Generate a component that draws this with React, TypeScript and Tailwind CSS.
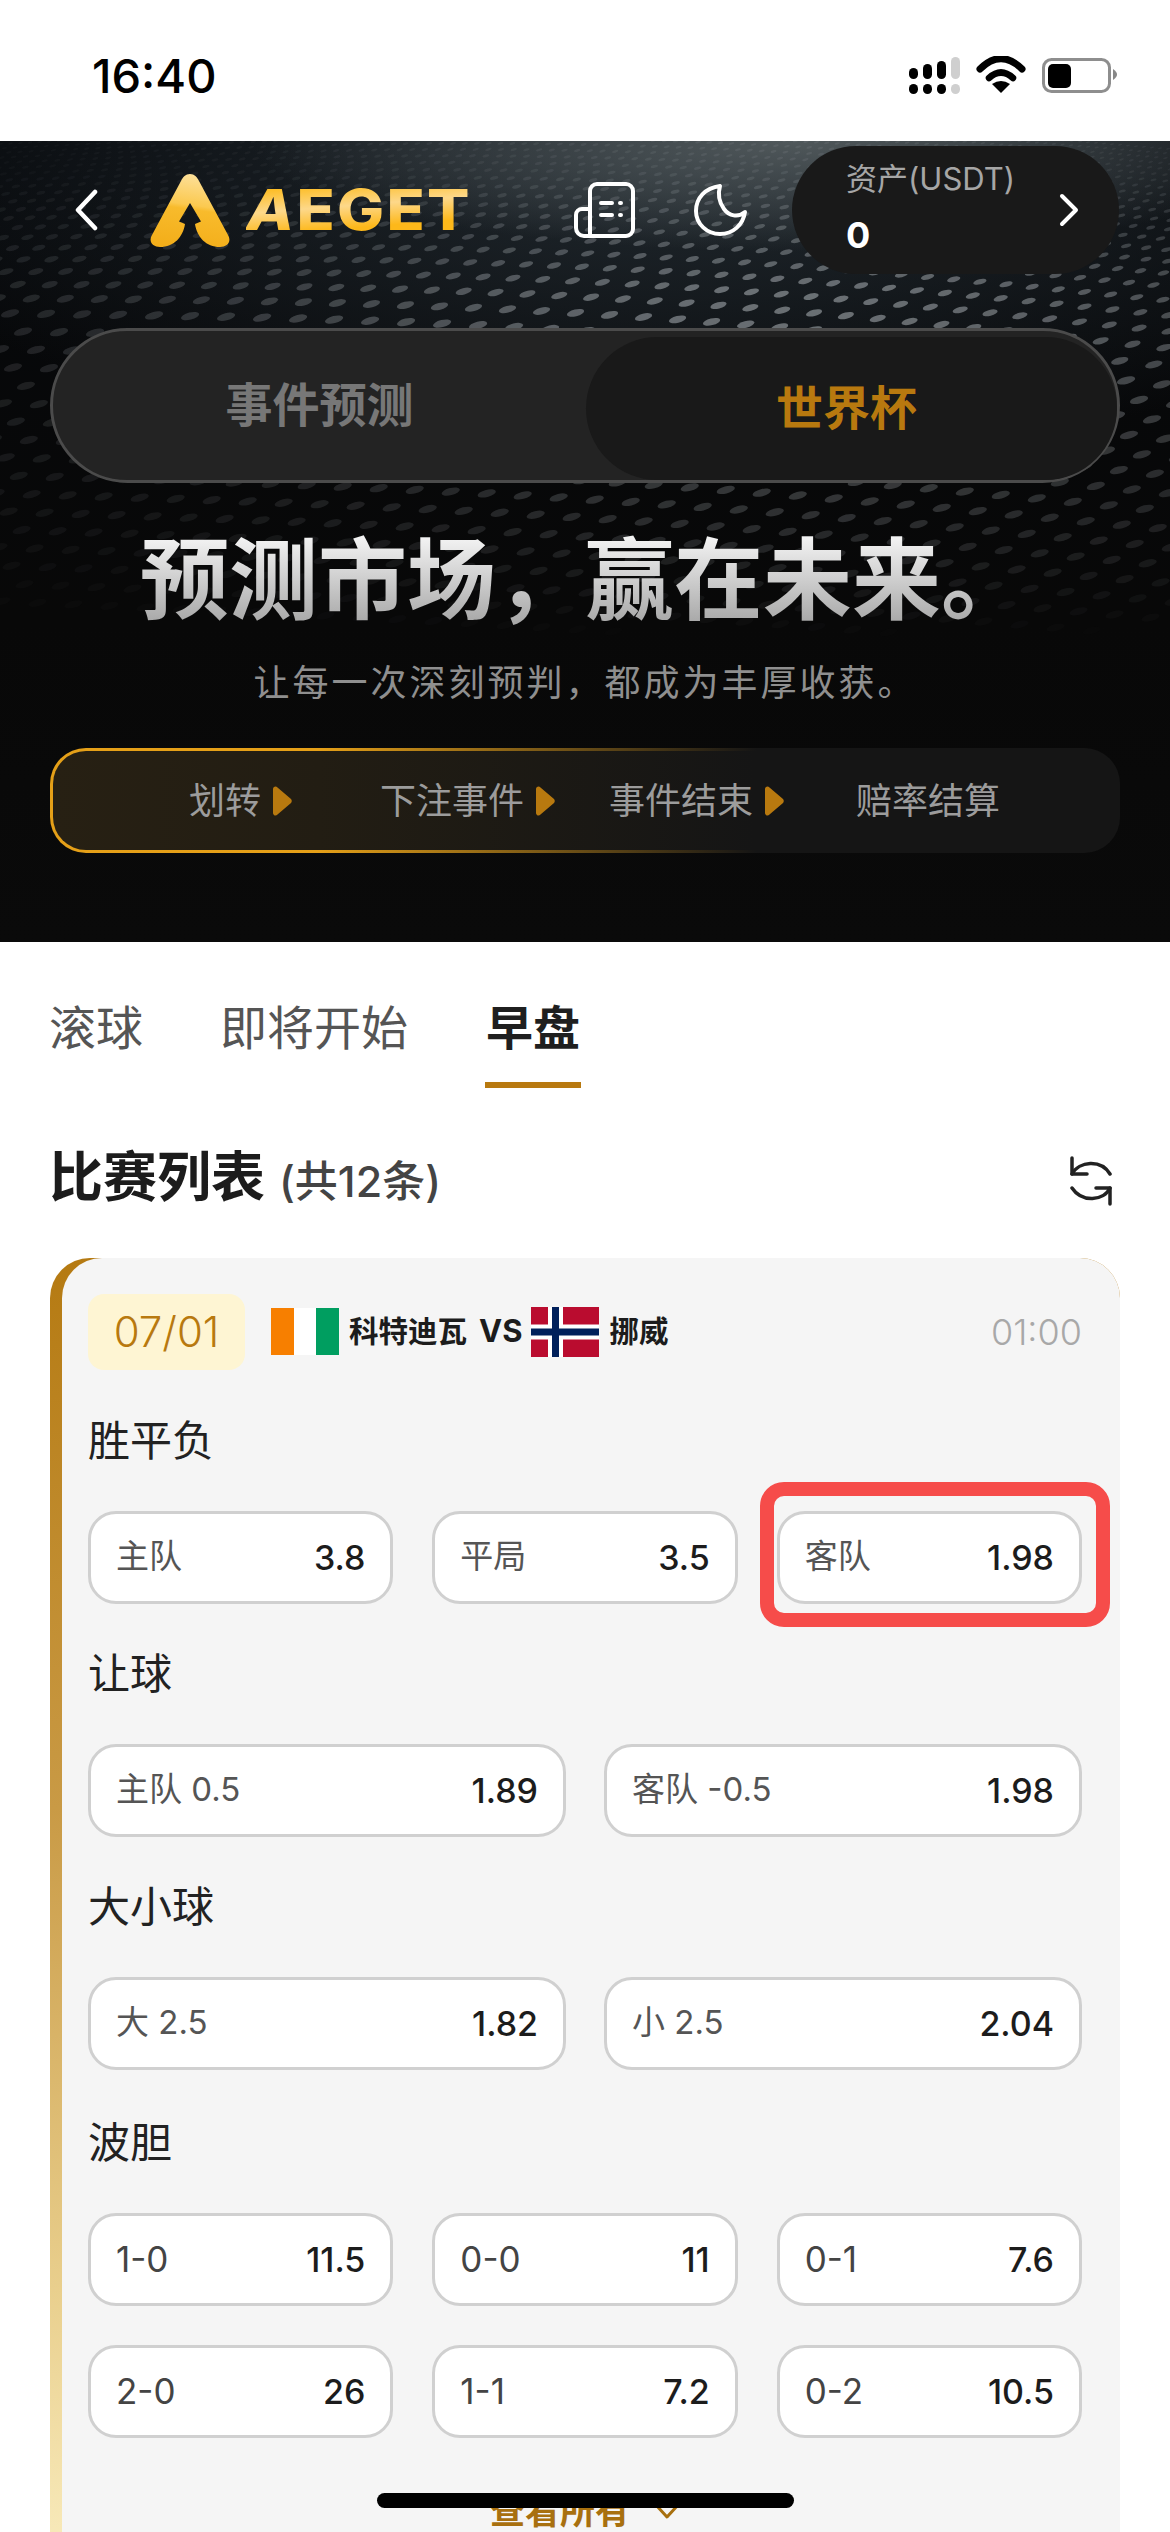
import React from "react";

type Dot = { x: number; y: number; rx: number; ry: number; o: number };

function buildDots(): Dot[] {
  const dots: Dot[] = [];
  let y = 141;
  let r = 0;
  while (y < 660) {
    const p = Math.min(18, 4 + (y - 141) * 0.068);
    const col = p * 2;
    const start = ((r * 0.36) % 1) * col - col;
    for (let x = start; x < 1190; x += col) {
      const warp = Math.sin((x / 1170) * Math.PI) * 26 * (1 - (y - 141) / 700);
      const yy = y - warp + (x / 1170) * p * 4 - p * 2;
      const cx = (x - 800) / 500;
      const horizontal = Math.exp(-cx * cx);
      let vertical = 1;
      if (yy < 290) vertical = Math.max(0.2, (yy - 141) / 149);
      if (yy > 340) vertical = Math.max(0, 1 - (yy - 340) / 300);
      const o = 0.52 * (0.22 + 0.78 * horizontal) * vertical;
      if (o > 0.012) dots.push({ x, y: yy, rx: col * 0.26, ry: p * 0.2, o });
    }
    y += p;
    r += 1;
  }
  return dots;
}

const DOTS = buildDots();

function HeroTexture() {
  return (
    <svg className="absolute left-0 top-0 h-[801px] w-[1170px]" viewBox="0 141 1170 801" aria-hidden="true">
      {DOTS.map((d, i) => (
        <ellipse
          key={i}
          cx={d.x}
          cy={d.y}
          rx={d.rx}
          ry={d.ry}
          fill="#b9bfc4"
          opacity={d.o}
          transform={`rotate(-14 ${d.x} ${d.y})`}
        />
      ))}
    </svg>
  );
}

function StatusIcons() {
  return (
    <svg width="208" height="38" viewBox="0 0 208 38">
      <g fill="#000">
        <rect x="0" y="12" width="9" height="11" rx="4.5" />
        <rect x="14" y="8" width="9" height="15" rx="4.5" />
        <rect x="28" y="5" width="9" height="18" rx="4.5" />
        <rect x="0" y="28" width="9" height="10" rx="4.5" />
        <rect x="14" y="28" width="9" height="10" rx="4.5" />
        <rect x="28" y="28" width="9" height="10" rx="4.5" />
      </g>
      <g fill="#cfcfcf">
        <rect x="42" y="1" width="9" height="22" rx="4.5" />
        <rect x="42" y="28" width="9" height="10" rx="4.5" />
      </g>
      <path d="M71 13 Q92 -8 113 13" fill="none" stroke="#000" strokeWidth="7" strokeLinecap="round" />
      <path d="M80 22 Q92 11 104 22" fill="none" stroke="#000" strokeWidth="6.5" strokeLinecap="round" />
      <path d="M92 37 L83 28 Q92 22 101 28 Z" fill="#000" />
      <rect x="134.5" y="3.5" width="66" height="32" rx="8" fill="none" stroke="#8e8e8e" strokeWidth="3" />
      <rect x="139" y="8" width="23" height="24" rx="5" fill="#000" />
      <path d="M204 13 C207 15 208 17 208 18.5 C208 20 207 22 204 24 Z" fill="#888" />
    </svg>
  );
}

function LogoMark() {
  return (
    <svg width="80" height="73" viewBox="0 0 80 73">
      <defs>
        <linearGradient id="mark" x1="0.55" y1="0" x2="0.4" y2="1">
          <stop offset="0" stopColor="#fde09a" />
          <stop offset="0.42" stopColor="#fbc94f" />
          <stop offset="0.48" stopColor="#f8bb2c" />
          <stop offset="1" stopColor="#f3ae1a" />
        </linearGradient>
      </defs>
      <path
        d="M40 0 C35.5 0 33 3 31 7 L2 61 C-2 68 3 73 10 73 C24 73 33 63 35 50 L29 47.5 L40 29 L51 47.5 L45 50 C47 63 56 73 70 73 C77 73 82 68 78 61 L49 7 C47 3 44.5 0 40 0 Z"
        fill="url(#mark)"
      />
    </svg>
  );
}

function ReceiptIcon() {
  return (
    <svg width="61" height="56" viewBox="0 0 61 56" fill="none" stroke="#fff" strokeWidth="4" strokeLinecap="round">
      <path d="M16 54 V9 a7 7 0 0 1 7-7 H52 a7 7 0 0 1 7 7 V47 a7 7 0 0 1-7 7 H10 a8 8 0 0 1-8-8 V33 a6 6 0 0 1 6-6 H16" strokeLinejoin="round" />
      <path d="M27 21 H38 M27 33 H38 M46 21 H47 M46 33 H47" />
    </svg>
  );
}

function MoonIcon() {
  return (
    <svg width="55" height="54" viewBox="0 0 55 54" fill="none" stroke="#fff" strokeWidth="4" strokeLinejoin="round">
      <path d="M27 3 C12 5 3 15 3 28 C3 41 14 51 27 51 C40 51 50 42 52 29 C45 35 36 33 31 26 C26 19 25 10 27 3 Z" />
    </svg>
  );
}

function Triangle() {
  return (
    <svg width="19" height="30" viewBox="0 0 19 30" className="shrink-0">
      <path d="M0 3 C0 0.5 3 -0.5 4.5 1.5 L18 13 C19 14.2 19 15.8 18 17 L4.5 28.5 C3 30.5 0 29.5 0 27 Z" fill="#b8790f" />
    </svg>
  );
}

function IvoryFlag() {
  return (
    <svg width="68" height="47" viewBox="0 0 68 47" className="shrink-0">
      <rect width="23" height="47" fill="#f77f00" />
      <rect x="23" width="22" height="47" fill="#fff" />
      <rect x="45" width="23" height="47" fill="#009e60" />
    </svg>
  );
}

function NorwayFlag() {
  return (
    <svg width="68" height="50" viewBox="0 0 68 50" className="shrink-0">
      <rect width="68" height="50" fill="#ba0c2f" />
      <rect x="17" width="15" height="50" fill="#fff" />
      <rect y="17.5" width="68" height="15" fill="#fff" />
      <rect x="21" width="7" height="50" fill="#00205b" />
      <rect y="21.5" width="68" height="7" fill="#00205b" />
    </svg>
  );
}

function RefreshIcon() {
  return (
    <svg width="42" height="50" viewBox="0 0 42 50" fill="none" stroke="#222" strokeWidth="3.5" strokeLinecap="round" strokeLinejoin="round">
      <path d="M2 2 V18 H17" />
      <path d="M2 18 C9 5 31 3 40 18" />
      <path d="M40 48 V32 H26" />
      <path d="M40 32 C34 45 12 47 2 32" />
    </svg>
  );
}

function Odd({ label, value, numeric, highlight }: { label: string; value: string; numeric?: boolean; highlight?: boolean }) {
  return (
    <div className="relative flex h-[93px] items-center justify-between rounded-[28px] border-[3px] border-[#d0d0d0] bg-white px-[25px]">
      <span className={numeric ? "text-[35px] text-[#444]" : "text-[33px] text-[#555]"}>{label}</span>
      <span className="text-[34px] font-medium text-[#1c1c1c]">{value}</span>
      {highlight && (
        <div className="absolute -bottom-[26px] -left-[20px] -right-[31px] -top-[32px] rounded-[24px] border-[14px] border-[#f64c4a]" />
      )}
    </div>
  );
}

function Label({ children, top }: { children: React.ReactNode; top: string }) {
  return <div className={`${top} mb-[46px] text-[42px] leading-[48px] text-[#222]`}>{children}</div>;
}

const STEPS = [
  { text: "划转", ml: "ml-[136px]" },
  { text: "下注事件", ml: "ml-[88px]" },
  { text: "事件结束", ml: "ml-[54px]" },
  { text: "赔率结算", ml: "ml-[72px]" },
];

export default function App() {
  return (
    <div className="relative h-[2532px] w-[1170px] overflow-hidden bg-white font-['Inter','Noto_Sans_CJK_SC',sans-serif]">
      <div className="flex h-[141px] items-center justify-between pl-[92px] pr-[53px] pt-[9px]">
        <span className="text-[47px] font-medium leading-none text-black">16:40</span>
        <StatusIcons />
      </div>

      <section className="relative h-[801px] overflow-hidden bg-[radial-gradient(ellipse_540px_110px_at_790px_0px,#50585b_0%,transparent_100%),radial-gradient(ellipse_860px_300px_at_680px_20px,#222a30_0%,transparent_100%),linear-gradient(180deg,#06080b_0%,#080808_60%,#0a0a0a_100%)]">
        <HeroTexture />
        <div className="relative flex h-full flex-col">
          <header className="mt-[5px] flex h-[128px] items-center pl-[75px] pr-[51px]">
            <svg width="23" height="42" viewBox="0 0 23 42" fill="none" stroke="#fff" strokeWidth="4.5" strokeLinecap="round" strokeLinejoin="round">
              <path d="M20 3 L3 21 L20 39" />
            </svg>
            <div className="ml-[52px]">
              <LogoMark />
            </div>
            <span className="ml-[16px] w-[222px] origin-left scale-x-[1.12] whitespace-nowrap bg-[linear-gradient(175deg,#fdbb1e_10%,#fdd88a_42%,#fdb81a_72%)] bg-clip-text text-[56px] font-extrabold leading-none tracking-[2px] text-transparent">
              <span className="italic">A</span>EGET
            </span>
            <div className="ml-[106px]">
              <ReceiptIcon />
            </div>
            <div className="ml-[58px]">
              <MoonIcon />
            </div>
            <div className="ml-[44px] flex h-[128px] w-[327px] items-center justify-between rounded-[64px] bg-[#191919] pl-[54px] pr-[40px]">
              <div className="flex flex-col">
                <span className="-mt-[6px] text-[31px] leading-[36px] text-[#a6a6a6]">资产(USDT)</span>
                <span className="mt-[20px] text-[36px] font-bold leading-[36px] text-white">0</span>
              </div>
              <svg width="20" height="34" viewBox="0 0 20 34" fill="none" stroke="#fff" strokeWidth="4" strokeLinecap="round" strokeLinejoin="round">
                <path d="M3 3 L17 17 L3 31" />
              </svg>
            </div>
          </header>

          <div className="mx-[50px] mt-[54px] flex h-[155px] rounded-[78px] border-[3px] border-[#4b4b4b] bg-[#232323]">
            <div className="flex w-[533px] items-center justify-center text-[47px] font-semibold text-[#777]">事件预测</div>
            <div className="mt-[6px] flex flex-1 items-center justify-center rounded-[72px] bg-[#191919] pr-[10px] text-[47px] font-bold text-[#b8790f]">世界杯</div>
          </div>

          <h1 className="mt-[45px] whitespace-nowrap bg-[linear-gradient(180deg,#f2f2f2_10%,#a9a9a9_90%)] bg-clip-text text-center text-[89px] font-bold leading-[104px] text-transparent">
            预测市场，赢在未来。
          </h1>
          <p className="mt-[29px] text-center text-[36px] leading-[44px] tracking-[3px] text-[#8f8f8f]">让每一次深刻预判，都成为丰厚收获。</p>

          <div className="mx-[50px] mt-[43px] h-[105px] rounded-[36px] bg-[linear-gradient(90deg,#e5a018_0%,#e5a018_25%,#151515_66%)] p-[3px]">
            <div className="flex h-full items-center rounded-[33px] bg-[linear-gradient(90deg,#272013_0%,#221d13_25%,#151515_66%)] text-[36px] leading-none text-[#9c9c9c]">
              {STEPS.map((s, i) => (
                <div key={s.text} className={`flex items-center gap-[12px] ${s.ml}`}>
                  <span>{s.text}</span>
                  {i < 3 && <Triangle />}
                </div>
              ))}
            </div>
          </div>
        </div>
      </section>

      <nav className="flex gap-[77px] pl-[49px] pr-[50px] pt-[58px]">
        <span className="text-[47px] leading-[56px] text-[#555]">滚球</span>
        <span className="text-[47px] leading-[56px] text-[#555]">即将开始</span>
        <span className="flex flex-col items-center">
          <span className="text-[47px] font-bold leading-[56px] text-[#1f1f1f]">早盘</span>
          <span className="mt-[26px] h-[6px] w-[96px] bg-[#b8790f]" />
        </span>
      </nav>

      <div className="mt-[60px] flex items-center justify-between pl-[49px] pr-[58px]">
        <div className="flex items-baseline gap-[14px]">
          <span className="text-[54px] font-bold leading-[60px] text-[#1c1c1c]">比赛列表</span>
          <span className="text-[43px] font-medium text-[#444]">(共12条)</span>
        </div>
        <RefreshIcon />
      </div>

      <div className="mx-[50px] mt-[44px] rounded-t-[40px] bg-[linear-gradient(180deg,#b57a12_0%,#c99a45_40%,#e9cf8d_75%,#fdf3ca_100%)]">
        <div className="ml-[12px] rounded-tl-[40px] rounded-tr-[40px] bg-[#f5f5f5] pb-[100px] pl-[26px] pr-[38px] pt-[36px]">
          <div className="flex h-[76px] items-center">
            <div className="flex h-[76px] w-[157px] items-center justify-center rounded-[16px] bg-[#fef5d3] text-[42px] font-light text-[#b8790f]">07/01</div>
            <div className="ml-[26px]">
              <IvoryFlag />
            </div>
            <span className="ml-[10px] text-[29.5px] font-bold text-[#1c1c1c]">科特迪瓦</span>
            <span className="ml-[12px] text-[31px] font-bold text-[#1c1c1c]">VS</span>
            <div className="ml-[9px]">
              <NorwayFlag />
            </div>
            <span className="ml-[10px] text-[29.5px] font-bold text-[#1c1c1c]">挪威</span>
            <span className="ml-auto text-[36px] font-light text-[#a8a8a8]">01:00</span>
          </div>

          <Label top="mt-[47px]">胜平负</Label>
          <div className="grid grid-cols-3 gap-[39px]">
            <Odd label="主队" value="3.8" />
            <Odd label="平局" value="3.5" />
            <Odd label="客队" value="1.98" highlight />
          </div>

          <Label top="mt-[46px]">让球</Label>
          <div className="grid grid-cols-2 gap-[38px]">
            <Odd label="主队 0.5" value="1.89" />
            <Odd label="客队 -0.5" value="1.98" />
          </div>

          <Label top="mt-[46px]">大小球</Label>
          <div className="grid grid-cols-2 gap-[38px]">
            <Odd label="大 2.5" value="1.82" />
            <Odd label="小 2.5" value="2.04" />
          </div>

          <Label top="mt-[49px]">波胆</Label>
          <div className="grid grid-cols-3 gap-x-[39px] gap-y-[39px]">
            <Odd numeric label="1-0" value="11.5" />
            <Odd numeric label="0-0" value="11" />
            <Odd numeric label="0-1" value="7.6" />
            <Odd numeric label="2-0" value="26" />
            <Odd numeric label="1-1" value="7.2" />
            <Odd numeric label="0-2" value="10.5" />
          </div>

          <div className="mt-[51px] flex items-center justify-center gap-[24px] text-[35px] font-bold leading-[44px] text-[#a8700f]">
            <span>查看所有</span>
            <svg width="26" height="16" viewBox="0 0 26 16" fill="none" stroke="#a8700f" strokeWidth="3" strokeLinecap="round" strokeLinejoin="round">
              <path d="M2 2 L13 14 L24 2" />
            </svg>
          </div>
        </div>
      </div>

      <div className="absolute bottom-[24px] left-[377px] h-[15px] w-[417px] rounded-full bg-black" />
    </div>
  );
}
